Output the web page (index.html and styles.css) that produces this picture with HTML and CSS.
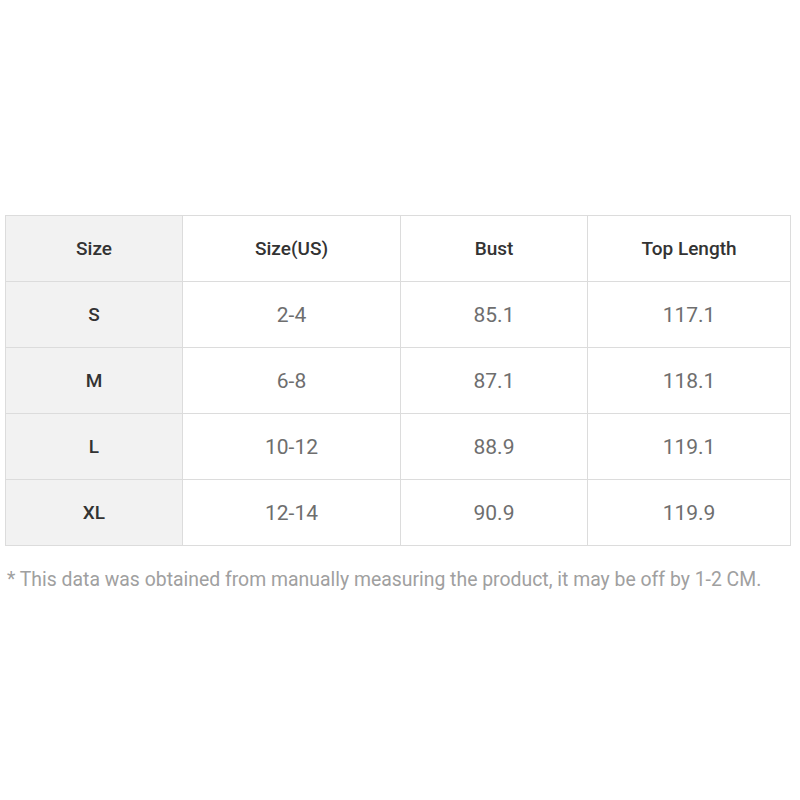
FILE: index.html
```html
<!DOCTYPE html>
<html>
<head>
<meta charset="utf-8">
<link rel="stylesheet" href="styles.css">
</head>
<body>
<div class="wrap">
<table class="size-table">
<colgroup><col class="c1"><col class="c2"><col class="c3"><col class="c4"></colgroup>
<tr class="head"><th class="first">Size</th><th>Size(US)</th><th>Bust</th><th>Top Length</th></tr>
<tr><th class="first">S</th><td>2-4</td><td>85.1</td><td>117.1</td></tr>
<tr><th class="first">M</th><td>6-8</td><td>87.1</td><td>118.1</td></tr>
<tr><th class="first">L</th><td>10-12</td><td>88.9</td><td>119.1</td></tr>
<tr><th class="first">XL</th><td>12-14</td><td>90.9</td><td>119.9</td></tr>
</table>
<p class="note">* This data was obtained from manually measuring the product, it may be off by 1-2 CM.</p>
</div>
</body>
</html>
```
FILE: styles.css
```css
html, body { margin: 0; padding: 0; background: #fff; }
.wrap { padding: 215px 10px 0 5px; }
.size-table {
  border-collapse: collapse;
  width: 785px;
  table-layout: fixed;
  font-family: Roboto, "Liberation Sans", sans-serif;
}
.c1 { width: 177px; }
.c2 { width: 218px; }
.c3 { width: 187px; }
.c4 { width: 203px; }
.size-table th, .size-table td {
  border: 1px solid #dcdcdc;
  height: 65px;
  padding: 0;
  text-align: center;
  vertical-align: middle;
}
.size-table th {
  font-weight: 500;
  font-size: 19px;
  color: #333;
}
.size-table th.first { background: #f2f2f2; }
.size-table td {
  font-size: 21px;
  color: #6e6e6e;
}
.note {
  margin: 22px 0 0 2px;
  font-family: Roboto, "Liberation Sans", sans-serif;
  font-size: 19.4px;
  color: #a0a0a0;
}
```
